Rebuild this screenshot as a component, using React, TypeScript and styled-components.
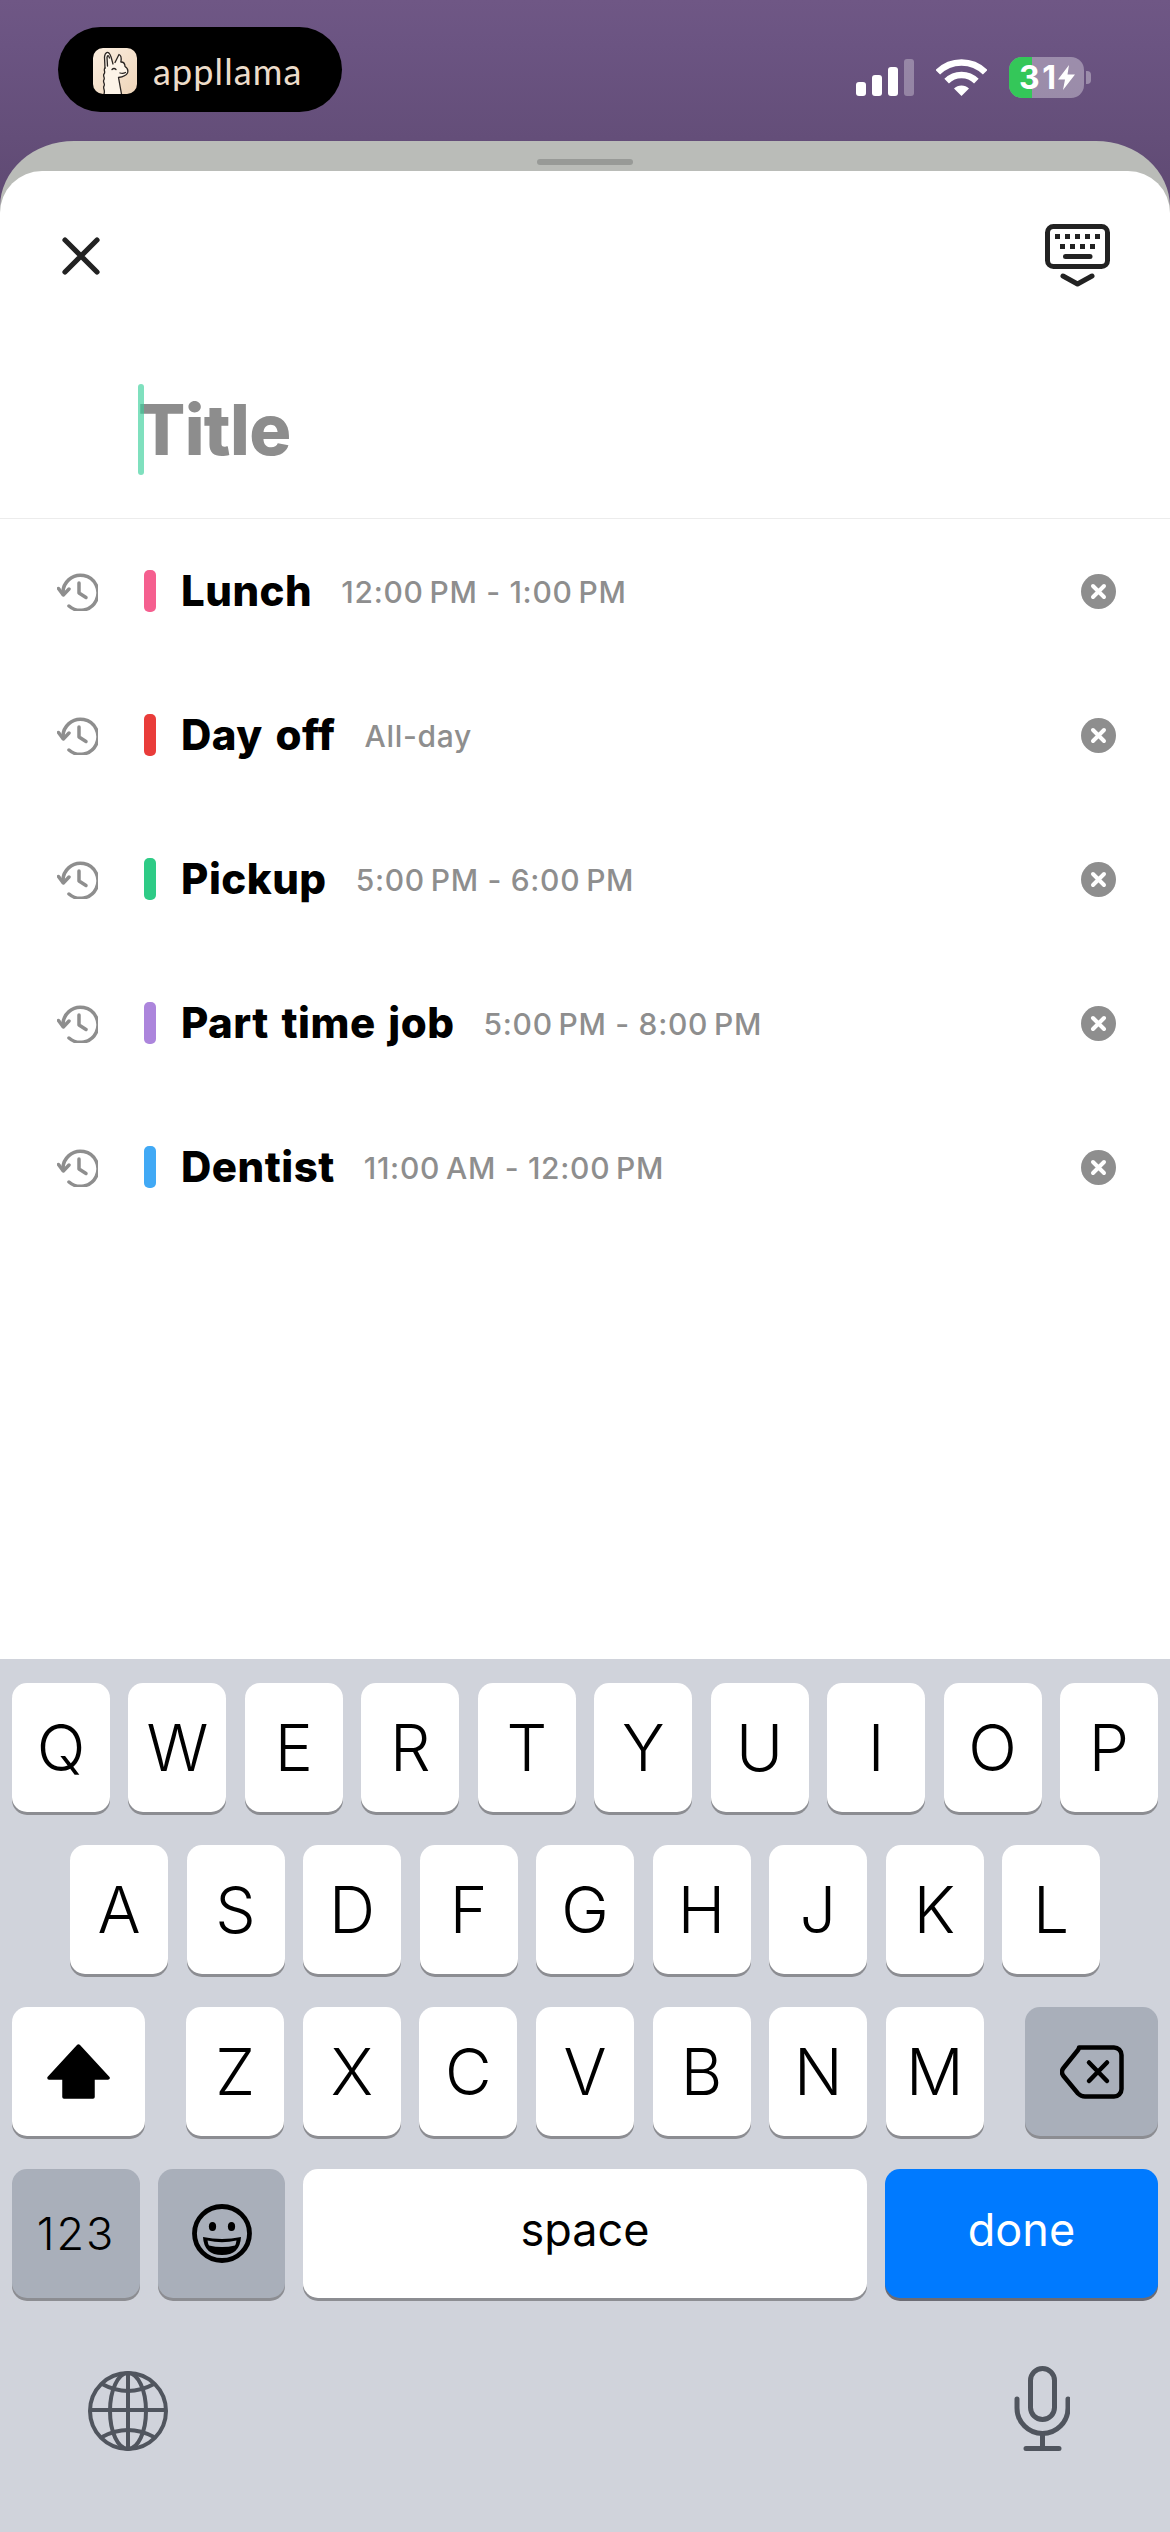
import React from "react";
import styled, { createGlobalStyle } from "styled-components";

const Global = createGlobalStyle`
  html, body { margin: 0; padding: 0; background: #5f4a72; }
  #root { width: 1170px; height: 2532px; }
  * { box-sizing: border-box; }
`;

const Page = styled.div`
  width: 1170px;
  height: 2532px;
  overflow: hidden;
  display: flex;
  flex-direction: column;
  font-family: Inter, "Liberation Sans", sans-serif;
  background: linear-gradient(180deg, #6f5785 0%, #6b5482 45px, #5d4870 230px);
`;

const StatusBar = styled.header`
  height: 141px;
  flex: none;
  display: flex;
  justify-content: space-between;
  align-items: flex-start;
  padding: 27px 79px 0 58px;
`;

const BrandPill = styled.div`
  width: 284px;
  height: 85px;
  border-radius: 43px;
  background: #000;
  display: flex;
  align-items: center;
  gap: 16px;
  padding: 3px 0 0 35px;
`;

const BrandName = styled.span`
  font-family: Lato, sans-serif;
  font-weight: 400;
  font-size: 36px;
  letter-spacing: 1.1px;
  line-height: 1;
  color: #ecdcca;
`;

const StatusGroup = styled.div`
  display: flex;
  align-items: flex-start;
  gap: 22px;
  padding-top: 30px;
`;

const StatusGlyph = styled.div`
  margin-top: 2px;
  svg { display: block; }
`;

const Battery = styled.div`
  display: flex;
  align-items: center;
  gap: 2px;
`;

const BatteryBody = styled.div`
  position: relative;
  width: 75px;
  height: 41px;
  border-radius: 13px;
  overflow: hidden;
  background: rgba(255, 255, 255, 0.34);
  display: flex;
  align-items: center;
  padding-left: 10px;
  color: #fff;
  font-weight: 700;
  font-size: 32px;
  svg { position: relative; }
`;

const BatteryFill = styled.div`
  position: absolute;
  inset: 0 auto 0 0;
  width: 23px;
  background: #34c759;
`;

const BatteryLabel = styled.span`
  position: relative;
  line-height: 1;
  letter-spacing: 2.5px;
`;

const BatteryNub = styled.div`
  width: 5px;
  height: 13px;
  border-radius: 0 4px 4px 0;
  background: rgba(255, 255, 255, 0.34);
`;

const BackSheet = styled.div`
  flex: 1;
  min-height: 0;
  display: flex;
  flex-direction: column;
  background: #babcb8;
  border-radius: 74px 74px 0 0 / 66px 66px 0 0;
`;

const Grabber = styled.div`
  width: 96px;
  height: 6px;
  border-radius: 3px;
  background: #989a97;
  margin: 18px auto 6px;
  flex: none;
`;

const Sheet = styled.main`
  flex: 1;
  min-height: 0;
  display: flex;
  flex-direction: column;
  background: #fff;
  border-radius: 42px 42px 0 0;
`;

const SheetHeader = styled.div`
  flex: none;
  display: flex;
  justify-content: space-between;
  align-items: center;
  padding: 53px 60px 0 62px;
  svg { display: block; }
`;

const TitleField = styled.div`
  position: relative;
  flex: none;
  height: 231px;
  border-bottom: 1px solid #ececec;
  padding: 99px 0 0 138px;
  font-size: 70px;
  font-weight: 800;
  line-height: 85px;
  letter-spacing: -0.7px;
  color: #8d8d8d;
`;

const Caret = styled.div`
  position: absolute;
  left: 138px;
  top: 96px;
  width: 6px;
  height: 91px;
  border-radius: 3px;
  background: rgba(58, 208, 155, 0.65);
`;

const List = styled.div`
  flex: 1;
  display: flex;
  flex-direction: column;
`;

const Row = styled.div`
  height: 144px;
  display: flex;
  align-items: center;
  padding: 0 54px 0 57px;
  svg { display: block; flex: none; }
`;

const ColorBar = styled.div<{ $color: string }>`
  width: 12px;
  height: 42px;
  border-radius: 5px;
  margin: 0 25px 0 46px;
  background: ${(p) => p.$color};
  flex: none;
`;

const EventName = styled.span`
  font-size: 42px;
  font-weight: 800;
  letter-spacing: 0.5px;
  word-spacing: 3px;
  color: #000;
  line-height: 1;
`;

const EventTime = styled.span`
  margin-left: 29px;
  font-size: 30px;
  font-weight: 500;
  letter-spacing: 0.7px;
  color: #8e8e8e;
  line-height: 1;
  position: relative;
  top: 1px;
`;

const ClearButton = styled.div`
  margin-left: auto;
`;

const Keyboard = styled.section`
  flex: none;
  height: 873px;
  background: #d0d3db;
  padding-top: 24px;
  display: flex;
  flex-direction: column;
  gap: 33px;
`;

const KeyRow = styled.div<{ $pad: number }>`
  display: flex;
  justify-content: space-between;
  padding: 0 ${(p) => p.$pad}px;
`;

const LetterGroup = styled.div`
  display: flex;
  gap: 18.6px;
`;

const variants = {
  white: "background:#fff;color:#000;box-shadow:0 3px 0 #8c8d92;",
  grey: "background:#a9afba;color:#000;box-shadow:0 3px 0 #8c8d92;",
  blue: "background:#007aff;color:#fff;box-shadow:0 3px 0 #6c6c74;",
};

const Key = styled.div<{ $w: number; $tone?: keyof typeof variants; $small?: boolean }>`
  width: ${(p) => p.$w}px;
  height: 129px;
  flex: none;
  border-radius: 15px;
  display: flex;
  align-items: center;
  justify-content: center;
  font-weight: 350;
  font-size: ${(p) => (p.$small ? 45 : 64)}px;
  line-height: 1;
  ${(p) => variants[p.$tone || "white"]}
  svg { display: block; }
`;

const KeyText = styled.span<{ $up?: number }>`
  position: relative;
  top: ${(p) => -(p.$up || 0)}px;
  font-weight: 400;
`;

const NumberLabel = styled.span`
  letter-spacing: 2px;
`;

const KeyboardFooter = styled.div`
  display: flex;
  justify-content: space-between;
  align-items: flex-end;
  padding: 35px 100px 0 88px;
  svg { display: block; }
`;

const EVENTS = [
  { name: "Lunch", time: "12:00\u202fPM - 1:00\u202fPM", color: "#f55f8f" },
  { name: "Day off", time: "All-day", color: "#e93c3a" },
  { name: "Pickup", time: "5:00\u202fPM - 6:00\u202fPM", color: "#2ecb86" },
  { name: "Part time job", time: "5:00\u202fPM - 8:00\u202fPM", color: "#ac85dc" },
  { name: "Dentist", time: "11:00\u202fAM - 12:00\u202fPM", color: "#41a9f5" },
];

const LlamaIcon = () => (
  <svg width="44" height="46" viewBox="0 0 44 46">
    <defs>
      <linearGradient id="llamaBg" x1="0" y1="0" x2="1" y2="1">
        <stop offset="0" stopColor="#fbeee0" />
        <stop offset="1" stopColor="#eed5b9" />
      </linearGradient>
    </defs>
    <rect width="44" height="46" rx="10" fill="url(#llamaBg)" />
    <path d="M11 46C11 36 10 28 12 20L11.5 9C12 4 15 3 17 6.5C18.5 9 19 13 20 16L23 13.5L26 6.5C27.5 7 28.5 10 28 13.5C31 14 32 16 32 18.5C34.5 20 35.5 22 34.5 25C33 28 29 29 25.5 29.5L28.5 46Z" fill="#fdf4e8" />
    <g fill="none" stroke="#2a2522" strokeWidth="1.3" strokeLinecap="round" strokeLinejoin="round">
      <path d="M12 20L11.5 9C12 4 15 3 17 6.5C18.5 9 19 13 20 16" />
      <path d="M14.5 18L14 9.5C14.5 7 15.5 7 16.5 10" />
      <path d="M22 14.5L26 6.5C27.5 7 28.5 10 28 13.5" />
      <path d="M28 14C31 14 32 16 32 18.5C34.5 20 35.5 22 34.5 25C33 28 29 29 25.5 29.5L28.5 46" />
      <path d="M12 20C10 22 13 24 11 26C9.5 28 12.5 30 10.8 32C9.5 34 12.5 36 11 38C9.5 40 12.5 42 11 46" />
      <path d="M19 21.5Q21 19.5 23 21.5" />
      <path d="M27 25Q30 26 32.5 24.5" />
    </g>
  </svg>
);

const SignalIcon = () => (
  <svg width="58" height="37" viewBox="0 0 58 37">
    <rect x="0" y="23" width="10" height="14" rx="3" fill="#fff" />
    <rect x="16" y="16" width="10" height="21" rx="3" fill="#fff" />
    <rect x="32" y="8" width="10" height="29" rx="3" fill="#fff" />
    <rect x="48" y="0" width="10" height="37" rx="3" fill="#fff" fillOpacity=".3" />
  </svg>
);

const WifiIcon = () => (
  <svg width="51" height="37" viewBox="0 0 51 37">
    <g fill="none" stroke="#fff" strokeWidth="6.5">
      <path d="M1.8 13.3A33.5 33.5 0 0 1 49.2 13.3" />
      <path d="M10.65 22.15A21 21 0 0 1 40.35 22.15" />
    </g>
    <path d="M25.5 37L18 29.5A10.6 10.6 0 0 1 33 29.5Z" fill="#fff" />
  </svg>
);

const BoltIcon = () => (
  <svg width="17" height="25" viewBox="0 0 17 25">
    <path d="M11 0L0 14.5H7L5 25L17 9.5H9.5Z" fill="#fff" />
  </svg>
);

const CloseIcon = () => (
  <svg width="38" height="38" viewBox="0 0 38 38">
    <path d="M3 3L35 35M35 3L3 35" stroke="#222" strokeWidth="5.2" strokeLinecap="round" />
  </svg>
);

const KeyboardDismissIcon = () => (
  <svg width="65" height="64" viewBox="0 0 65 64">
    <rect x="2.5" y="2.5" width="60" height="40" rx="6" fill="none" stroke="#222" strokeWidth="5" />
    <g fill="#222">
      {[10, 20, 30, 40, 50].map((x) => (
        <rect key={x} x={x} y="10" width="5" height="5" />
      ))}
      {[15, 25, 35, 45].map((x) => (
        <rect key={x} x={x} y="20" width="5" height="5" />
      ))}
      <rect x="18" y="30" width="29.5" height="5" rx="2.5" />
    </g>
    <path d="M18 52L32.5 60L47 52" fill="none" stroke="#222" strokeWidth="5" strokeLinecap="round" strokeLinejoin="round" />
  </svg>
);

const HistoryIcon = () => (
  <svg width="41" height="40" viewBox="0 0 41 40">
    <g fill="none" stroke="#8e8e8e" strokeWidth="3.5" strokeLinecap="round" strokeLinejoin="round">
      <path d="M6 23A17.5 17.5 0 1 1 12 35" />
      <path d="M1.5 17.5L6.3 24L12 18" />
      <path d="M22 12V22L29 26.5" />
    </g>
  </svg>
);

const ClearIcon = () => (
  <svg width="35" height="35" viewBox="0 0 35 35">
    <circle cx="17.5" cy="17.5" r="17.5" fill="#8e8e8e" />
    <path d="M12 12L23 23M23 12L12 23" stroke="#fff" strokeWidth="4" strokeLinecap="round" />
  </svg>
);

const ShiftIcon = () => (
  <svg width="63" height="55" viewBox="0 0 63 55">
    <path d="M31.5 2L61 34H46V53H17V34H2Z" fill="#000" stroke="#000" strokeWidth="3.5" strokeLinejoin="round" />
  </svg>
);

const DeleteIcon = () => (
  <svg width="64" height="54" viewBox="0 0 64 54">
    <path d="M19 2.5H54A7.5 7.5 0 0 1 61.5 10V44A7.5 7.5 0 0 1 54 51.5H25C22 51.5 20 50.5 18 48.5L3.5 31C1.5 28.5 1.5 25.5 3.5 23L18 5C18.8 4 19 2.5 19 2.5Z" fill="none" stroke="#000" strokeWidth="4.5" strokeLinejoin="round" />
    <path d="M29 17.5L47 36M47 17.5L29 36" stroke="#000" strokeWidth="4.5" strokeLinecap="round" />
  </svg>
);

const EmojiIcon = () => (
  <svg width="60" height="59" viewBox="0 0 60 59">
    <ellipse cx="30" cy="29.5" rx="27.5" ry="27" fill="none" stroke="#000" strokeWidth="4.8" />
    <ellipse cx="20.5" cy="22.5" rx="3.6" ry="4.5" />
    <ellipse cx="39.5" cy="22.5" rx="3.6" ry="4.5" />
    <path d="M11 33Q30 37 49 33Q48 51 30 51Q12 51 11 33Z" />
    <path d="M15.5 36.5Q30 40 44.5 36.5Q44 40 43 41.5Q30 44.5 17 41.5Q16 40 15.5 36.5Z" fill="#a9afba" />
  </svg>
);

const GlobeIcon = () => (
  <svg width="80" height="80" viewBox="0 0 80 80">
    <g fill="none" stroke="#50555e" strokeWidth="4">
      <ellipse cx="40" cy="40" rx="38" ry="38" />
      <ellipse cx="40" cy="40" rx="18" ry="38" />
      <path d="M40 2V78M2 39H78" />
      <path d="M14 13Q40 27 66 13" />
      <path d="M14 66Q40 52 66 66" />
    </g>
  </svg>
);

const MicIcon = () => (
  <svg width="56" height="85" viewBox="0 0 56 85">
    <g fill="none" stroke="#50555e" strokeWidth="5" strokeLinecap="round">
      <rect x="16.5" y="2.5" width="24" height="51" rx="12" />
      <path d="M3 33V42A25.5 25.5 0 0 0 54 42V33" />
      <path d="M28.5 68V82M12 82.5H45" />
    </g>
  </svg>
);

const App = () => (
  <Page>
    <Global />
    <StatusBar>
      <BrandPill>
        <LlamaIcon />
        <BrandName>appllama</BrandName>
      </BrandPill>
      <StatusGroup>
        <StatusGlyph><SignalIcon /></StatusGlyph>
        <StatusGlyph><WifiIcon /></StatusGlyph>
        <Battery>
          <BatteryBody>
            <BatteryFill />
            <BatteryLabel>31</BatteryLabel>
            <BoltIcon />
          </BatteryBody>
          <BatteryNub />
        </Battery>
      </StatusGroup>
    </StatusBar>
    <BackSheet>
      <Grabber />
      <Sheet>
        <SheetHeader>
          <CloseIcon />
          <KeyboardDismissIcon />
        </SheetHeader>
        <TitleField>
          Title
          <Caret />
        </TitleField>
        <List>
          {EVENTS.map((e) => (
            <Row key={e.name}>
              <HistoryIcon />
              <ColorBar $color={e.color} />
              <EventName>{e.name}</EventName>
              <EventTime>{e.time}</EventTime>
              <ClearButton>
                <ClearIcon />
              </ClearButton>
            </Row>
          ))}
        </List>
        <Keyboard>
          <KeyRow $pad={12}>
            {"QWERTYUIOP".split("").map((k) => (
              <Key key={k} $w={98}>{k}</Key>
            ))}
          </KeyRow>
          <KeyRow $pad={70}>
            {"ASDFGHJKL".split("").map((k) => (
              <Key key={k} $w={98}>{k}</Key>
            ))}
          </KeyRow>
          <KeyRow $pad={12}>
            <Key $w={133}><ShiftIcon /></Key>
            <LetterGroup>
              {"ZXCVBNM".split("").map((k) => (
                <Key key={k} $w={98}>{k}</Key>
              ))}
            </LetterGroup>
            <Key $w={133} $tone="grey"><DeleteIcon /></Key>
          </KeyRow>
          <KeyRow $pad={12}>
            <Key $w={128} $tone="grey" $small><NumberLabel>123</NumberLabel></Key>
            <Key $w={127} $tone="grey"><EmojiIcon /></Key>
            <Key $w={564} $small><KeyText $up={4}>space</KeyText></Key>
            <Key $w={273} $tone="blue" $small><KeyText $up={4}>done</KeyText></Key>
          </KeyRow>
          <KeyboardFooter>
            <GlobeIcon />
            <MicIcon />
          </KeyboardFooter>
        </Keyboard>
      </Sheet>
    </BackSheet>
  </Page>
);

export default App;
